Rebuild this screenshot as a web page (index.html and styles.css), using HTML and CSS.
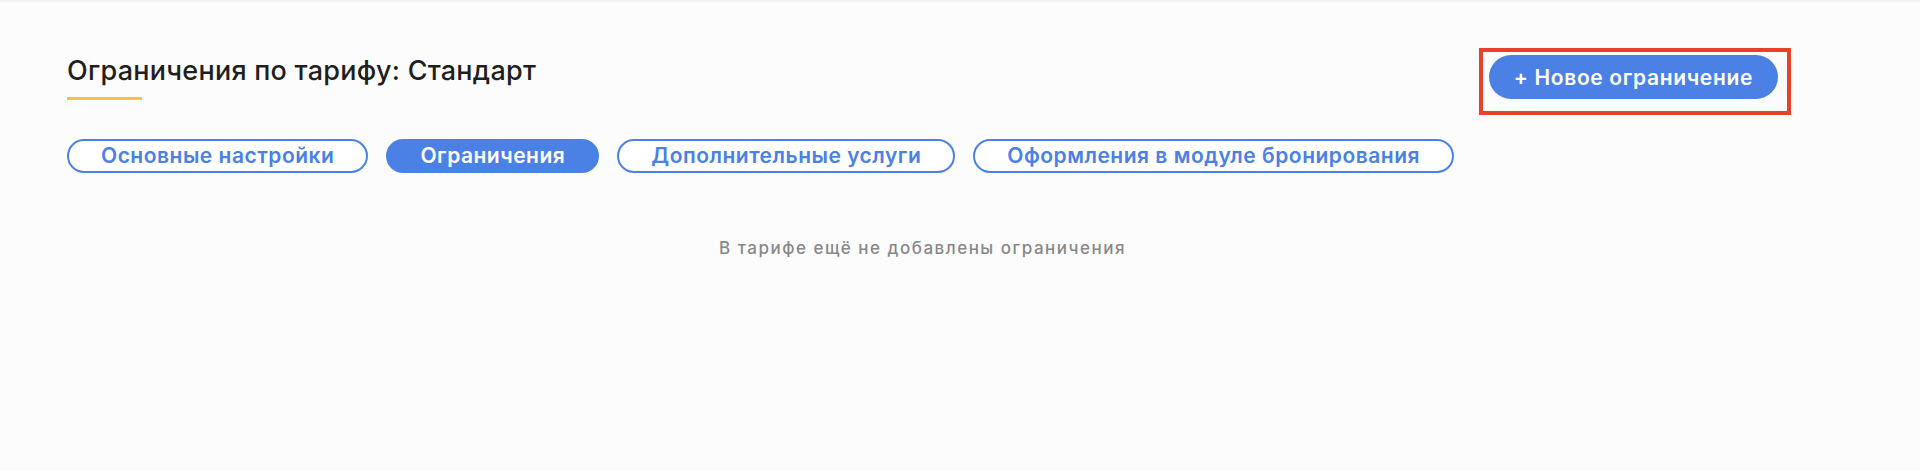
FILE: index.html
```html
<!DOCTYPE html>
<html lang="ru">
<head>
<meta charset="utf-8">
<title>Ограничения по тарифу</title>
<link rel="stylesheet" href="styles.css">
</head>
<body>
<div class="page">
  <header class="header">
    <div class="title-block">
      <h1 class="title">Ограничения по тарифу: Стандарт</h1>
      <div class="title-underline"></div>
    </div>
    <div class="action">
      <button class="btn-primary">+ Новое ограничение</button>
      <div class="highlight"></div>
    </div>
  </header>
  <nav class="tabs">
    <button class="tab">Основные настройки</button>
    <button class="tab tab-active">Ограничения</button>
    <button class="tab">Дополнительные услуги</button>
    <button class="tab">Оформления в модуле бронирования</button>
  </nav>
  <p class="empty">В тарифе ещё не добавлены ограничения</p>
</div>
</body>
</html>
```
FILE: styles.css
```css
html, body {
  margin: 0;
  padding: 0;
}
body {
  background: #fcfcfc;
  font-family: Inter, "Noto Sans", sans-serif;
  width: 1920px;
  height: 471px;
  overflow: hidden;
  box-shadow: inset 0 3px 3px -2px #ececec;
}
.page {
  padding: 55px 142px 0 67px;
}
.header {
  display: flex;
  justify-content: space-between;
  align-items: flex-start;
}
.title {
  margin: 0;
  font-size: 27px;
  line-height: 32px;
  font-weight: 500;
  letter-spacing: 0.25px;
  color: #1f1f1f;
}
.title-underline {
  width: 75px;
  height: 3px;
  margin-top: 10px;
  background: #f5c244;
}
.action {
  position: relative;
}
.btn-primary {
  display: block;
  height: 44px;
  padding: 0 25px;
  border: none;
  border-radius: 22px;
  background: #4b80e5;
  color: #ffffff;
  font-family: inherit;
  font-size: 21px;
  font-weight: 600;
  letter-spacing: 0.65px;
}
.highlight {
  position: absolute;
  left: -10px;
  top: -7px;
  right: -13px;
  bottom: -16px;
  border: 4px solid #e8412b;
  pointer-events: none;
}
.tabs {
  display: flex;
  gap: 18px;
  margin-top: 39px;
}
.tab {
  height: 34px;
  padding: 0 32px;
  border: 2px solid #4b80e5;
  border-radius: 17px;
  background: #ffffff;
  color: #4b80e5;
  font-family: inherit;
  font-size: 21px;
  font-weight: 600;
  letter-spacing: 0.5px;
  line-height: 30px;
}
.tab-active {
  background: #4b80e5;
  color: #ffffff;
}
.empty {
  margin: 65px 0 0;
  text-align: center;
  font-size: 17px;
  line-height: 20px;
  font-weight: 500;
  letter-spacing: 1.5px;
  color: #888888;
}
```
